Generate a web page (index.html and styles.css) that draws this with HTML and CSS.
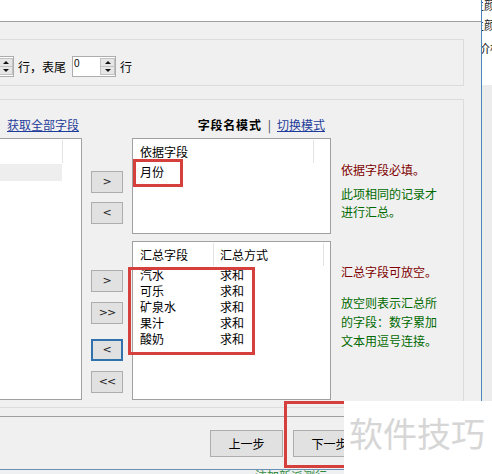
FILE: index.html
```html
<!DOCTYPE html>
<html lang="zh-CN">
<head>
<meta charset="utf-8">
<title>汇总设置</title>
<link rel="stylesheet" href="styles.css">
</head>
<body>
<div class="screen">
  <div class="dialog">
    <div class="topstrip"></div>
    <div class="group group-top">
      <div class="spinrow">
        <div class="numbox numbox-cut"><span class="spin"><span class="half up"></span><span class="half down"></span></span></div>
        <span class="lbl lbl-first">行，表尾</span>
        <div class="numbox"><span class="numval">0</span><span class="spin"><span class="half up"></span><span class="half down"></span></span></div>
        <span class="lbl lbl-last">行</span>
      </div>
    </div>
    <div class="group group-main">
      <a class="link link-all">获取全部字段</a>
      <div class="mode"><b>字段名模式</b><span class="sep">|</span><a class="link">切换模式</a></div>
      <div class="list list-left">
        <div class="lhead"><span class="hcell hcell-left"></span></div>
        <div class="lrow-sel"></div>
      </div>
      <div class="btncol">
        <button class="mv mv-a">&gt;</button>
        <button class="mv mv-b">&lt;</button>
        <button class="mv mv-c">&gt;</button>
        <button class="mv mv-d">&gt;&gt;</button>
        <button class="mv mv-e focus">&lt;</button>
        <button class="mv mv-f">&lt;&lt;</button>
      </div>
      <div class="lists">
        <div class="list list-key">
          <div class="lhead"><span class="hcell hcell-key">依据字段</span></div>
          <div class="lrow"><span class="cell">月份</span></div>
        </div>
        <div class="list list-sum">
          <div class="lhead"><span class="hcell hcell-c1">汇总字段</span><span class="hcell hcell-c2">汇总方式</span></div>
          <div class="lrow"><span class="cell">汽水</span><span class="cell cell2">求和</span></div>
          <div class="lrow"><span class="cell">可乐</span><span class="cell cell2">求和</span></div>
          <div class="lrow"><span class="cell">矿泉水</span><span class="cell cell2">求和</span></div>
          <div class="lrow"><span class="cell">果汁</span><span class="cell cell2">求和</span></div>
          <div class="lrow"><span class="cell">酸奶</span><span class="cell cell2">求和</span></div>
        </div>
      </div>
      <div class="notes">
        <p class="note warn n1">依据字段必填。</p>
        <p class="note tip n2">此项相同的记录才<br>进行汇总。</p>
        <p class="note warn n3">汇总字段可放空。</p>
        <p class="note tip n4">放空则表示汇总所<br>的字段：数字累加<br>文本用逗号连接。</p>
      </div>
    </div>
    <div class="footer">
      <button class="fbtn">上一步</button>
      <button class="fbtn">下一步</button>
    </div>
  </div>
  <div class="side">
    <div class="side-top">
      <span class="frag f1">主颜</span>
      <span class="frag f2">主颜</span>
      <span class="frag f3">价格</span>
    </div>
    <div class="side-rest"></div>
  </div>
</div>
<div class="under"><span class="under-text">注加新派测行</span></div>

<div class="mark mark-month"></div>
<div class="mark mark-sum"></div>
<div class="mark mark-next"></div>
<div class="watermark">软件技巧</div>
</body>
</html>
```

FILE: styles.css
```css
* { box-sizing: border-box; }
html, body { margin: 0; padding: 0; }
body {
  width: 492px;
  height: 474px;
  overflow: hidden;
  position: relative;
  background: #f0f0f0;
  font-family: "Noto Sans CJK SC", "Noto Sans", sans-serif;
  font-size: 12px;
  line-height: 14px;
  color: #000;
}

.screen { display: flex; height: 470px; }

.dialog {
  width: 482px;
  height: 470px;
  flex: none;
  display: flex;
  flex-direction: column;
  background: #f0f0f0;
  border-right: 1px solid #4a86bb;
  border-bottom: 1px solid #6a90b6;
  overflow: hidden;
}

.topstrip {
  height: 22px;
  flex: none;
  background: #fff;
  border-bottom: 1px solid #a0a0a0;
}

.group {
  flex: none;
  width: 474px;
  margin-left: -10px;
  border: 1px solid #dcdcdc;
}

/* top group with spinners */
.group-top {
  margin-top: 17px;
  height: 47px;
  padding-top: 16px;
}
.spinrow { display: flex; align-items: center; height: 21px; }
.numbox {
  width: 44px;
  height: 21px;
  flex: none;
  display: flex;
  justify-content: space-between;
  background: #fff;
  border: 1px solid #adadad;
}
.numbox-cut { margin-left: -21px; justify-content: flex-end; }
.numval {
  font-family: "Liberation Sans", sans-serif;
  font-size: 10px;
  line-height: 10px;
  padding: 2px 0 0 1px;
}
.spin {
  width: 15px;
  margin: 1px 0;
  display: flex;
  flex-direction: column;
  background: #e6e6e6;
  border: 1px solid #c2c2c2;
}
.half { flex: 1; display: flex; align-items: center; justify-content: center; }
.half.up { border-bottom: 1px solid #c2c2c2; }
.half.up::after {
  content: "";
  border-left: 3px solid transparent;
  border-right: 3px solid transparent;
  border-bottom: 3px solid #111;
}
.half.down::after {
  content: "";
  border-left: 3px solid transparent;
  border-right: 3px solid transparent;
  border-top: 3px solid #111;
}
.lbl { white-space: nowrap; }
.lbl-first { margin: 0 6px 0 4px; }
.lbl-last { margin-left: 4px; }

/* main group */
.group-main {
  margin-top: 13px;
  height: 309px;
  padding: 18px 0 7px 0;
  display: grid;
  grid-template-columns: 91px 32px 199px 1fr;
  grid-template-rows: 14px 262px;
  column-gap: 9px;
  row-gap: 6px;
}
.link { color: #1f3c9b; text-decoration: underline; white-space: nowrap; cursor: pointer; }
.link-all { grid-column: 1 / 3; grid-row: 1; margin-left: 16px; }
.mode {
  grid-column: 3;
  grid-row: 1;
  justify-self: end;
  margin-right: 6px;
  display: flex;
  white-space: nowrap;
}
.mode b { font-weight: bold; letter-spacing: 0.8px; }
.sep { color: #444; margin: 0 6px 0 6px; }

.list {
  background: #fff;
  border: 1px solid #a0a0a0;
  overflow: hidden;
}
.list-left { grid-column: 1; grid-row: 2; }
.lhead { display: flex; height: 25px; }
.hcell {
  height: 23px;
  margin-top: 1px;
  line-height: 23px;
  padding-left: 7px;
  border-right: 1px solid #e3e3e3;
  white-space: nowrap;
  flex: none;
}
.hcell-left { width: 71px; }
.hcell-key { width: 181px; }
.hcell-c1 { width: 81px; }
.hcell-c2 { width: 110px; padding-left: 6px; }
.lrow-sel { width: 70px; height: 17px; background: #eeeeee; }
.lrow { display: flex; height: 16px; line-height: 16px; }
.cell { width: 81px; padding-left: 7px; white-space: nowrap; flex: none; }
.cell2 { width: auto; padding-left: 6px; }

.btncol { grid-column: 2; grid-row: 2; display: flex; flex-direction: column; }
.mv {
  width: 32px;
  height: 22px;
  flex: none;
  padding: 0;
  margin: 0;
  background: #e1e1e1;
  border: 1px solid #adadad;
  font-family: "DejaVu Sans", sans-serif;
  font-size: 11px;
  line-height: 18px;
  color: #222;
}
.mv.focus { border: 2px solid #2f72ae; }
.mv-a { margin-top: 33px; }
.mv-b { margin-top: 9px; }
.mv-c { margin-top: 46px; }
.mv-d { margin-top: 10px; letter-spacing: -1px; }
.mv-e { margin-top: 15px; }
.mv-f { margin-top: 10px; letter-spacing: -1px; }

.lists { grid-column: 3; grid-row: 2; display: flex; flex-direction: column; gap: 7px; }
.list-key { height: 96px; }
.list-sum { height: 159px; }

.notes { grid-column: 4; grid-row: 2; padding-left: 1px; }
.note { margin: 0; line-height: 18px; white-space: nowrap; }
.warn { color: #800000; }
.tip { color: #006a00; }
.n1 { margin-top: 23px; }
.n2 { margin-top: 6px; }
.n3 { margin-top: 42px; }
.n4 { margin-top: 12px; line-height: 19px; }

/* footer */
.footer {
  flex: 1;
  margin-top: 8px;
  border-top: 1px solid #a0a0a0;
  padding: 13px 0 0 210px;
  display: flex;
  align-items: flex-start;
  gap: 10px;
}
.fbtn {
  width: 73px;
  height: 27px;
  flex: none;
  padding: 0;
  background: #e1e1e1;
  border: 1px solid #adadad;
  font-family: "Noto Sans CJK SC", sans-serif;
  font-size: 12px;
  color: #000;
}

/* window behind, right */
.side { width: 10px; flex: none; display: flex; flex-direction: column; overflow: hidden; }
.side-top { height: 85px; background: #fff; display: flex; flex-direction: column; overflow: hidden; }
.frag { white-space: nowrap; display: block; color: #222; }
.f1 { margin: -2px 0 0 -10px; }
.f2 { margin: 6px 0 0 -10px; }
.f3 { margin: 9px 0 0 -4px; }
.side-rest { flex: 1; background: #ececec; }

.under { height: 4px; overflow: hidden; padding-left: 255px; background: #eef0f2; }
.under-text { color: #2f8a3c; white-space: nowrap; display: block; line-height: 12px; }

/* annotation overlays */
.mark { position: absolute; border: 3px solid #d6403c; }
.mark-month { left: 133px; top: 159px; width: 50px; height: 28px; }
.mark-sum { left: 128px; top: 267px; width: 127px; height: 88px; }
.mark-next { left: 284px; top: 401px; width: 100px; height: 67px; }

.watermark {
  position: absolute;
  left: 344px;
  top: 401px;
  width: 148px;
  height: 73px;
  background: #fff;
  color: #d6d6d6;
  font-size: 34px;
  line-height: 64px;
  padding-left: 5px;
  white-space: nowrap;
  overflow: hidden;
}
```
